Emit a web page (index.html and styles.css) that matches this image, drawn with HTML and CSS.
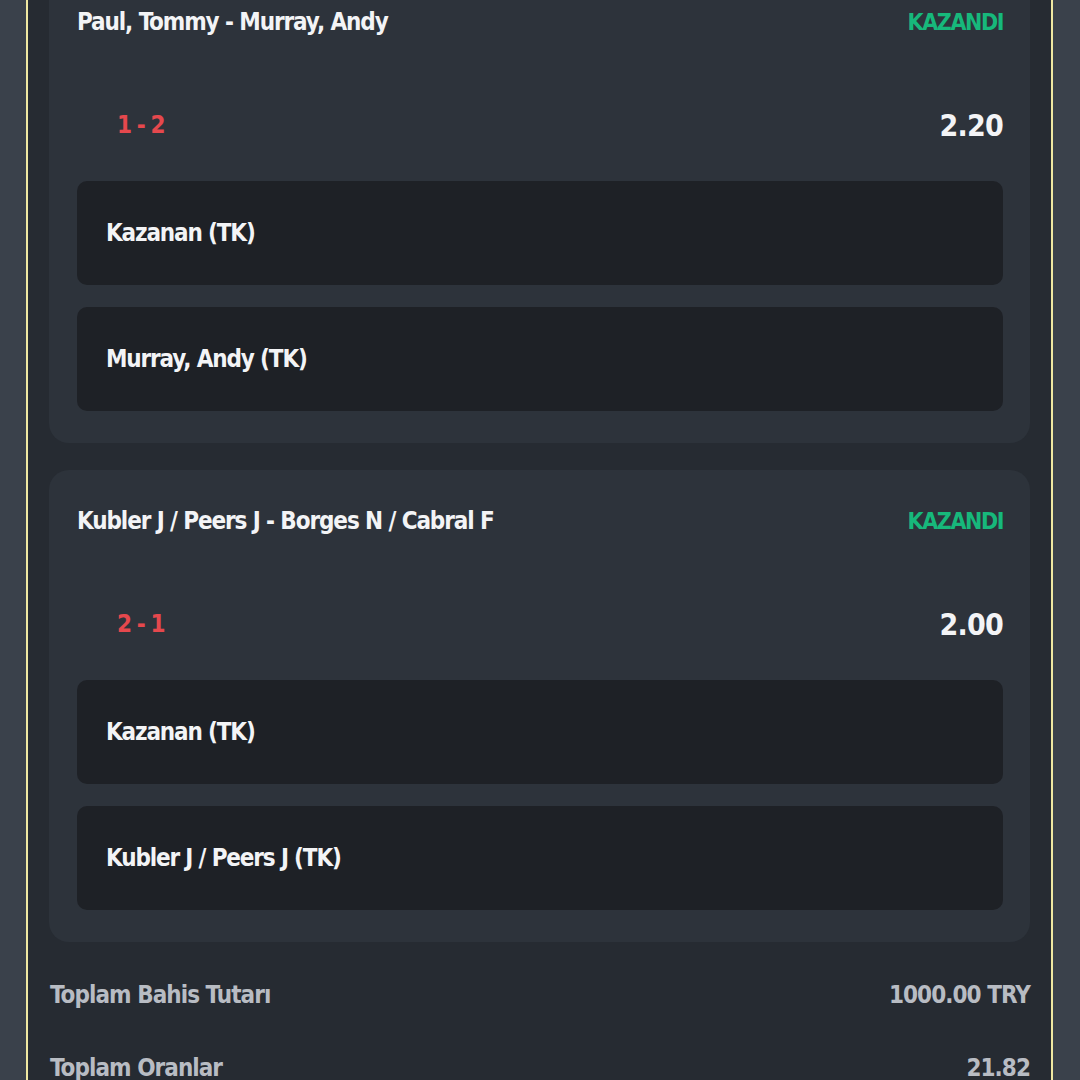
FILE: index.html
```html
<!DOCTYPE html>
<html lang="tr">
<head>
<meta charset="utf-8">
<link rel="stylesheet" href="styles.css">
</head>
<body>
<div class="page">
  <div class="panel">
    <div class="list">
      <div class="card">
        <div class="head">
          <span class="title">Paul, Tommy - Murray, Andy</span>
          <span class="status">KAZANDI</span>
        </div>
        <div class="score-row">
          <span class="score">1 - 2</span>
          <span class="odds">2.20</span>
        </div>
        <div class="boxes">
          <div class="box">Kazanan (TK)</div>
          <div class="box">Murray, Andy (TK)</div>
        </div>
      </div>
      <div class="card">
        <div class="head">
          <span class="title">Kubler J / Peers J - Borges N / Cabral F</span>
          <span class="status">KAZANDI</span>
        </div>
        <div class="score-row">
          <span class="score">2 - 1</span>
          <span class="odds">2.00</span>
        </div>
        <div class="boxes">
          <div class="box">Kazanan (TK)</div>
          <div class="box">Kubler J / Peers J (TK)</div>
        </div>
      </div>
    </div>
    <div class="summary">
      <div class="sum-row"><span>Toplam Bahis Tutarı</span><span>1000.00 TRY</span></div>
      <div class="sum-row"><span>Toplam Oranlar</span><span>21.82</span></div>
    </div>
  </div>
</div>
</body>
</html>
```

FILE: styles.css
```css
html, body {
  margin: 0;
  padding: 0;
  background: #3a414b;
  height: 100%;
  overflow: hidden;
}
body {
  font-family: "DejaVu Sans Condensed", "DejaVu Sans", sans-serif;
  font-weight: bold;
  color: #f3f4f6;
}
.page {
  height: 1080px;
  padding: 0 27px 0 26px;
  box-sizing: border-box;
}
.panel {
  height: 100%;
  display: flex;
  flex-direction: column;
  background: #262b32;
  border-left: 2px solid #efe8a2;
  border-right: 2px solid #efe8a2;
  padding: 0 21px;
  box-sizing: border-box;
}
.list {
  margin-top: -29px;
  display: flex;
  flex-direction: column;
  gap: 27px;
  flex-shrink: 0;
}
.card {
  background: #2d333b;
  border-radius: 20px;
  padding: 36px 27px 32px 28px;
}
.head {
  display: flex;
  justify-content: space-between;
  align-items: center;
  height: 30px;
  font-size: 24px;
  letter-spacing: -1.1px;
}
.status {
  color: #17b87b;
  font-size: 23px;
  letter-spacing: -1.4px;
}
.score-row {
  margin-top: 68px;
  height: 40px;
  display: flex;
  justify-content: space-between;
  align-items: center;
  padding-left: 40px;
}
.score {
  color: #e5484d;
  font-size: 24px;
  letter-spacing: -1.4px;
}
.odds {
  font-size: 30px;
  letter-spacing: -0.8px;
}
.boxes {
  margin-top: 36px;
  display: flex;
  flex-direction: column;
  gap: 22px;
}
.box {
  background: #1e2126;
  border-radius: 10px;
  height: 104px;
  display: flex;
  align-items: center;
  padding-left: 29px;
  font-size: 24px;
  letter-spacing: -1.15px;
}
.summary {
  margin-top: 38px;
  display: flex;
  flex-direction: column;
  gap: 43px;
  flex-shrink: 0;
}
.sum-row {
  display: flex;
  justify-content: space-between;
  align-items: center;
  height: 30px;
  font-size: 24px;
  letter-spacing: -0.95px;
  color: #b8bcc3;
  padding-left: 1px;
}
```
